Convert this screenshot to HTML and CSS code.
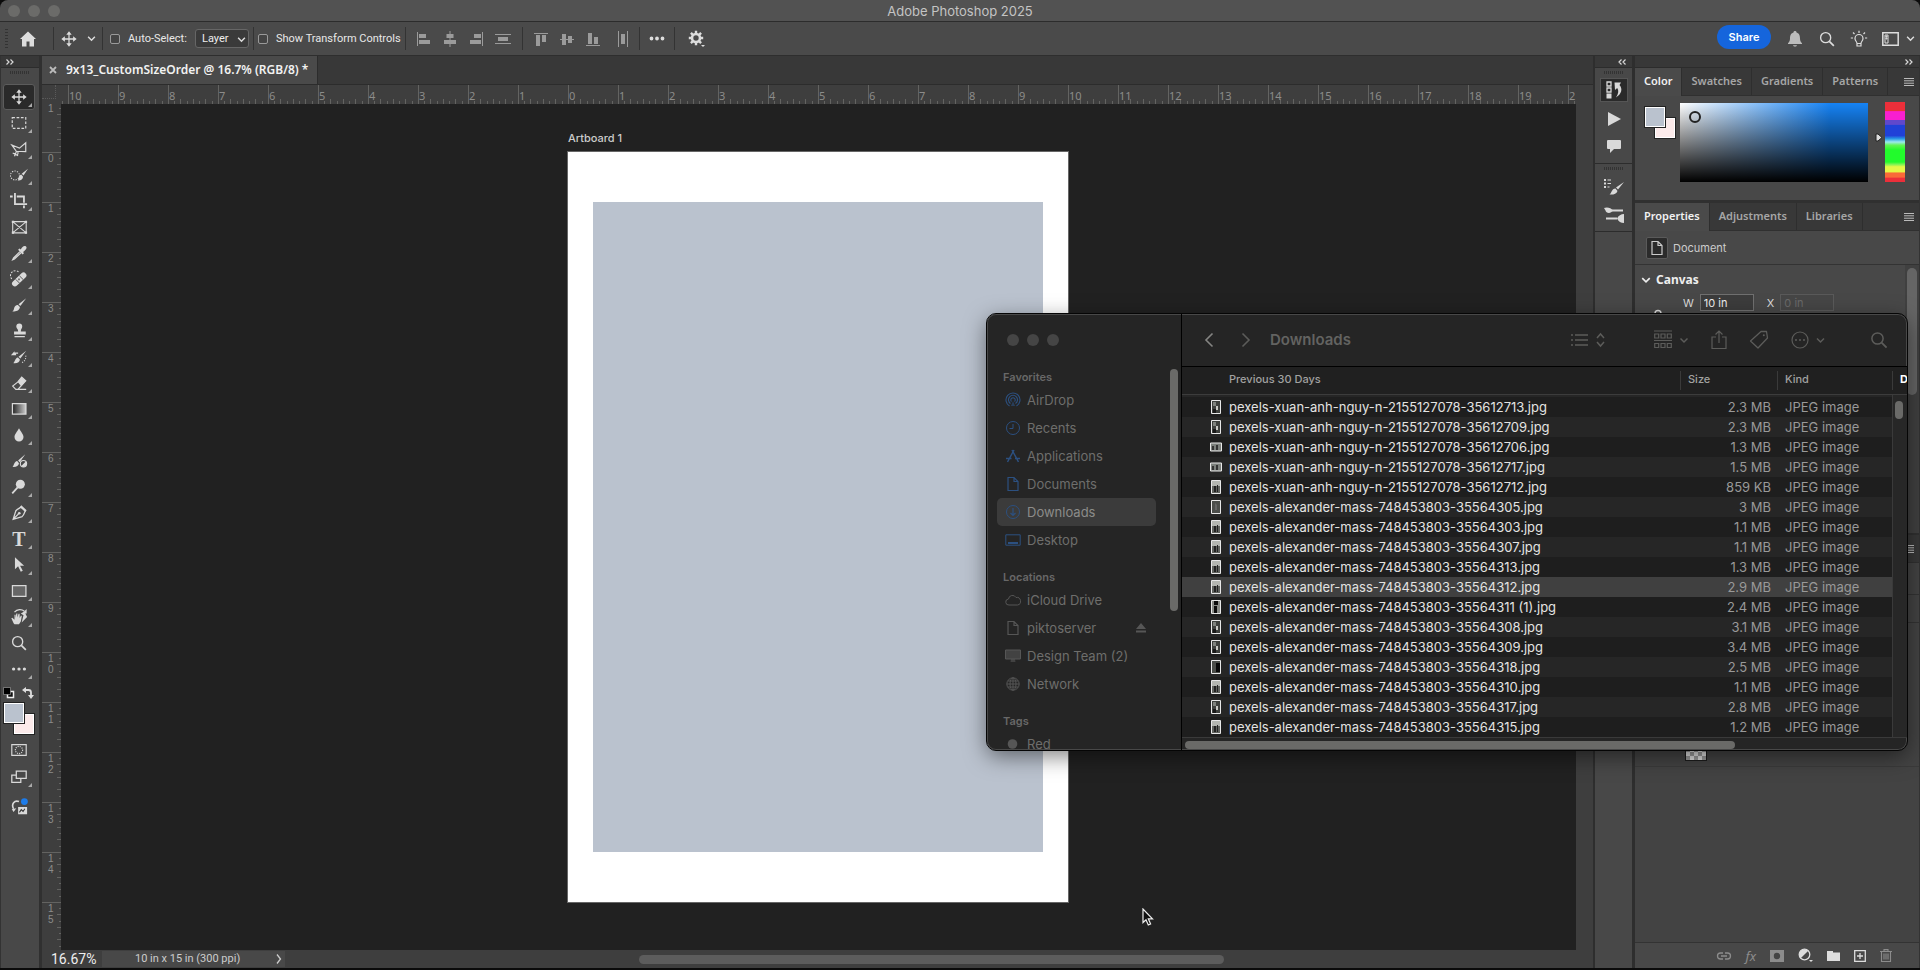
FILE: index.html
```html
<!DOCTYPE html>
<html lang="en">
<head>
<meta charset="utf-8">
<title>Adobe Photoshop 2025</title>
<link rel="stylesheet" href="styles.css">
</head>
<body>
<svg class="defs" aria-hidden="true">
  <defs>
    <symbol id="move" viewBox="0 0 20 20"><path d="M10 3.500v13M3.500 10h13" stroke="currentColor" stroke-width="1.400"/><path d="M10 1.500l3 3.900H7zM10 18.500l3-3.900H7zM1.500 10l3.900-3v6zM18.500 10l-3.900-3v6z" fill="currentColor"/></symbol>
    <symbol id="chev" viewBox="0 0 8 8"><path d="M1 2.500l3 3 3-3" fill="none" stroke="currentColor" stroke-width="1.300"/></symbol>
    <symbol id="search" viewBox="0 0 20 20"><circle cx="8.500" cy="8.500" r="5.600" fill="none" stroke="currentColor" stroke-width="1.500"/><path d="M12.600 12.600l5 5" stroke="currentColor" stroke-width="1.800"/></symbol>
    <symbol id="menu" viewBox="0 0 10 8"><path d="M0 .5h10M0 2.800h10M0 5.200h10M0 7.500h10" stroke="currentColor"/></symbol>
    <symbol id="page" viewBox="0 0 16 16"><path d="M3 1.500h6l4 4v9H3zM9 1.500v4h4" fill="none" stroke="currentColor" stroke-width="1.200"/></symbol>
    <symbol id="brush" viewBox="0 0 20 20"><path d="M18 2.500L9.500 9.200l2 2z" fill="currentColor"/><path d="M8.800 10l2.200 2.300c-.2 3.400-4 5.700-8.500 4.700 2-.9 1.600-2.300 2.300-4.300C5.600 10.700 7.300 9.600 8.800 10z" fill="currentColor"/></symbol>
    <symbol id="port" viewBox="0 0 12 14"><path d="M1.500.500h9v13h-9z" fill="#61635f" stroke="#e8e8e8"/><path d="M2 1h8v5H2z" fill="#b4b6b1"/><path d="M4 6h2v6H4zM7 5h1v7H7z" fill="#222"/></symbol>
    <symbol id="portdark" viewBox="0 0 12 14"><path d="M1.500.500h9v13h-9z" fill="#3e403d" stroke="#e8e8e8"/><path d="M3 2h3v4H3z" fill="#7f827d"/><path d="M6 6h2v4H6z" fill="#c8c8c4"/><path d="M3 9h3v4H3z" fill="#181818"/></symbol>
    <symbol id="land" viewBox="0 0 12 14"><path d="M.5 3h11v8H.5z" fill="#7c807c" stroke="#e8e8e8"/><path d="M2 6h2v4H2zM6 5h2v5H6z" fill="#333"/></symbol>
    <pattern id="htick" x="7" width="50" height="19" patternUnits="userSpaceOnUse"><path d="M.5 0v19M6.500 16v3M12.500 14v5M19.500 16v3M25.500 14v5M31.500 16v3M37.500 14v5M44.500 16v3" stroke="#636361"/></pattern>
    <pattern id="vtick" y="48" width="19" height="50" patternUnits="userSpaceOnUse"><path d="M0 .5h19M17 6.500h2M15 12.500h4M17 19.500h2M15 25.500h4M17 31.500h2M15 37.500h4M17 44.500h2" stroke="#636361"/></pattern>
  </defs>
</svg>
<div class="app">
  <header class="titlebar">
    <span class="lights"><i></i><i></i><i></i></span>
    <h1>Adobe Photoshop 2025</h1>
  </header>

  <div class="options">
    <div class="seg home"><button aria-label="Home"><svg width="18" height="18" viewBox="0 0 18 18"><path d="M9 1.500l8 7.500h-2v7.500h-4.500v-5h-3v5H3V9H1z" fill="currentColor"/></svg></button></div>
    <div class="seg movetool"><svg width="18" height="18"><use href="#move"/></svg><svg width="9" height="9"><use href="#chev"/></svg></div>
    <div class="seg auto"><label><input type="checkbox">Auto-Select:</label>
      <span class="select"><select aria-label="Auto-Select target"><option>Layer</option></select><svg width="9" height="9"><use href="#chev"/></svg></span></div>
    <div class="seg show"><label><input type="checkbox">Show Transform Controls</label></div>
    <div class="seg align">
      <svg width="14" height="16" viewBox="0 0 14 16"><path d="M.5 1v14" stroke="currentColor"/><path d="M2 3h7v4H2zM2 9h11v4H2z" fill="currentColor"/></svg>
      <svg width="14" height="16" viewBox="0 0 14 16"><path d="M7 0v16" stroke="currentColor"/><path d="M3.500 3h7v4h-7zM1 9h12v4H1z" fill="currentColor"/></svg>
      <svg width="14" height="16" viewBox="0 0 14 16"><path d="M13.500 1v14" stroke="currentColor"/><path d="M5 3h7v4H5zM1 9h11v4H1z" fill="currentColor"/></svg>
      <svg width="16" height="16" viewBox="0 0 16 16"><path d="M0 3.500h16M0 12.500h16" stroke="currentColor"/><path d="M3 6h10v4H3z" fill="currentColor"/></svg>
    </div>
    <div class="seg align">
      <svg width="14" height="16" viewBox="0 0 14 16"><path d="M0 2.500h14" stroke="currentColor"/><path d="M2 4h4v11H2zM8 4h4v7H8z" fill="currentColor"/></svg>
      <svg width="14" height="16" viewBox="0 0 14 16"><path d="M0 8.500h14" stroke="currentColor"/><path d="M2 3h4v11H2zM8 5h4v7H8z" fill="currentColor"/></svg>
      <svg width="14" height="16" viewBox="0 0 14 16"><path d="M0 14.500h14" stroke="currentColor"/><path d="M2 2h4v11H2zM8 6h4v7H8z" fill="currentColor"/></svg>
      <svg class="dist" width="12" height="16" viewBox="0 0 12 16"><path d="M1.500 0v16M10.500 0v16" stroke="currentColor"/><path d="M4 3h4v10H4z" fill="currentColor"/></svg>
    </div>
    <div class="seg dots"><svg width="16" height="5" viewBox="0 0 16 5"><path d="M2.500 2.500h0M8 2.500h0M13.500 2.500h0" stroke="currentColor" stroke-width="3.800" stroke-linecap="round"/></svg></div>
    <div class="seg gear"><svg width="18" height="18" viewBox="0 0 18 18"><circle cx="8" cy="8" r="4" fill="none" stroke="currentColor" stroke-width="2.600"/><path d="M8 .8v3M8 12.200v3M.8 8h3M12.200 8h3M2.900 2.900l2 2M11.100 11.100l2 2M13.100 2.900l-2 2M4.900 11.100l-2 2" stroke="currentColor" stroke-width="2.400"/><path d="M13 15h4l-2 2z" fill="currentColor"/></svg></div>
    <div class="actions">
      <button class="share">Share</button>
      <svg width="18" height="18" viewBox="0 0 18 18"><path d="M9 1c1 0 1.500.6 1.500 1.400C13.500 3.200 14 6 14 8.500c0 2.500.7 3.500 2 4.700V14H2v-.8c1.300-1.200 2-2.200 2-4.700 0-2.500.5-5.300 3.500-6.100C7.500 1.600 8 1 9 1zM7 15.200h4c-.3 1.800-3.700 1.800-4 0z" fill="#bcbcbc"/></svg>
      <svg width="18" height="18"><use href="#search"/></svg>
      <svg width="18" height="18" viewBox="0 0 18 18"><path d="M7 13.500c0-2-2-2.600-2-5a4 4 0 018 0c0 2.400-2 3-2 5v2.500H7zM7 13.500h4M9 3V.8M4.500 4L3 2.500M13.500 4L15 2.500M3 8H.8M15 8h2.200" fill="none" stroke="currentColor" stroke-width="1.200"/></svg>
      <svg width="17" height="14" viewBox="0 0 17 14"><path d="M.8.800h15.400v12.400H.8z" fill="none" stroke="currentColor" stroke-width="1.500"/><path d="M3 3h3v8H3zM4 4h1v1H4zM4 6h1v1H4z" fill="none" stroke="currentColor"/></svg>
      <svg width="9" height="9"><use href="#chev"/></svg>
    </div>
  </div>

  <main class="work">
    <aside class="tools">
      <div class="colhead"><svg width="8" height="6" viewBox="0 0 8 6"><path d="M.5.500L3 3 .5 5.500M4.500.500L7 3 4.500 5.500" fill="none" stroke="currentColor" stroke-width="1.200"/></svg></div>
      <div class="grip"></div>
      <button class="tool on more" aria-label="Move"><svg><use href="#move"/></svg></button>
      <button class="tool more" aria-label="Marquee"><svg viewBox="0 0 20 20"><path d="M2.500 4h15v12h-15z" fill="none" stroke="currentColor" stroke-width="1.300" stroke-dasharray="3 1.800"/></svg></button>
      <button class="tool more" aria-label="Lasso"><svg viewBox="0 0 20 20"><path d="M7 12.500L2 5.500l8.500 3.500 7-6v10L7 12.500zM7 12.500a2 2 0 11-2 2M7 13l-2 5M3 14.500l6 3" fill="none" stroke="currentColor" stroke-width="1.300"/></svg></button>
      <button class="tool more" aria-label="Quick selection"><svg viewBox="0 0 20 20"><circle cx="5.500" cy="10.500" r="5" fill="none" stroke="currentColor" stroke-width="1.200" stroke-dasharray="1.400 1.400"/><path d="M20 3l-7 5.500 2 2zM12.500 9.500l2 2.500c0 3-3 4.500-6 4 1.500-1 .5-5.500 4-6.500z" fill="currentColor"/></svg></button>
      <button class="tool more" aria-label="Crop"><svg viewBox="0 0 20 20"><path d="M5.500 1v12.500H19M0 5h3M7.500 5h8v7M15.500 15v3" fill="none" stroke="currentColor" stroke-width="2"/></svg></button>
      <button class="tool" aria-label="Frame"><svg viewBox="0 0 20 20"><path d="M3 4h15v12.500H3zM3 4l15 12.500M18 4L3 16.500" fill="none" stroke="currentColor" stroke-width="1.200"/><path d="M2 3h2.500v2.500H2zM16.500 3H19v2.500h-2.500zM2 15h2.500v2.500H2zM16.500 15H19v2.500h-2.500z" fill="currentColor"/></svg></button>
      <button class="tool more" aria-label="Eyedropper"><svg viewBox="0 0 20 20"><path d="M11 8.500l-7 7-1 2 2-.8 7.300-7" fill="none" stroke="currentColor" stroke-width="1.400"/><path d="M9 6.500l1.500-1.500L12 6c1.500-3 3.500-4.500 5.500-3.500S18 6.500 14.500 9l1 1.200-1.500 1.500z" fill="currentColor"/></svg></button>
      <button class="tool more" aria-label="Healing brush"><svg viewBox="0 0 20 20"><path d="M5.500 15L15 6" stroke="currentColor" stroke-width="6.500" stroke-linecap="round"/><path d="M6.500 10.500l4 4M10.500 6.500l4 4" stroke="#484848" stroke-width="1"/><path d="M10 9.500v2" stroke="#484848" stroke-width="1.500"/><path d="M2 10a5 5 0 018-7.500" fill="none" stroke="currentColor" stroke-width="1.200" stroke-dasharray="2 1.500"/></svg></button>
      <button class="tool more" aria-label="Brush"><svg><use href="#brush"/></svg></button>
      <button class="tool more" aria-label="Clone stamp"><svg viewBox="0 0 20 20"><path d="M7 5a3.300 3.300 0 116.600 0c0 2-1.600 2.500-1.600 5.500h5.500V14h-13v-3.500h4.600C9.100 7.500 7 7 7 5zM5 15.500h11.500V17H5z" fill="currentColor"/></svg></button>
      <button class="tool more" aria-label="History brush"><svg viewBox="0 0 20 20"><path d="M18 3L9.500 9.800l2 2zM8.800 10.500l2.200 2.200c0 3-3.500 4.800-7.500 4 2-.9 2-5.600 5.300-6.200zM1 8l4-4.500V5h4v1.500H6.500L7 8z" fill="currentColor"/><path d="M17.500 8.500c.5 4-1.500 6.500-4.500 8" fill="none" stroke="currentColor" stroke-width="1.200" stroke-dasharray="1.200 1.500"/></svg></button>
      <button class="tool more" aria-label="Eraser"><svg viewBox="0 0 20 20"><path d="M8.500 9L13 3.500l4.500 4-5 6z" fill="currentColor"/><path d="M8.500 9L3 13.500 6.500 17h2.300L17.500 7.500 13 3.500zM6.500 17H18" fill="none" stroke="currentColor" stroke-width="1.300"/></svg></button>
      <button class="tool more" aria-label="Gradient"><svg viewBox="0 0 20 20"><defs><linearGradient id="gg"><stop stop-color="#222"/><stop offset="1" stop-color="#ccc"/></linearGradient></defs><path d="M2.700 4h15v11.600h-15z" fill="url(#gg)" stroke="currentColor" stroke-width="1.400"/></svg></button>
      <button class="tool more" aria-label="Blur"><svg viewBox="0 0 20 20"><path d="M10 2.500c2 4 5 6.500 5 9.800a5 5 0 01-10 0C5 9 8 6.500 10 2.500z" fill="currentColor"/></svg></button>
      <button class="tool" aria-label="Mixer brush"><svg viewBox="0 0 20 20"><path d="M17 2.500L9 9.500l1.800 1.800zM8 10l2 2.500c-.3 3-3.500 4.500-7.500 4 2-.9 2-6 5.500-6.500z" fill="currentColor"/><circle cx="15" cy="13" r="3.500" fill="none" stroke="currentColor" stroke-width="1.200"/><path d="M12.500 15.500l5-5a3.500 3.500 0 01-5 5z" fill="currentColor"/></svg></button>
      <button class="tool more" aria-label="Dodge"><svg viewBox="0 0 20 20"><circle cx="11.500" cy="7" r="5" fill="currentColor"/><path d="M8.500 10.500l-6 6.500" stroke="currentColor" stroke-width="2"/></svg></button>
      <button class="tool more" aria-label="Pen"><svg viewBox="0 0 20 20"><path d="M12.500 3l4.500 4.500c-1 2-1.500 5-3.500 6.500L3.500 17l3-9.500C8 5.500 10.500 5 12.500 3zM3.500 17l6-6" fill="none" stroke="currentColor" stroke-width="1.400"/><circle cx="10.300" cy="10.300" r="1.500" fill="currentColor"/><path d="M12.500 1.500L18.500 7l-1.500 2-6-5.500z" fill="currentColor"/></svg></button>
      <button class="tool more type" aria-label="Type">T</button>
      <button class="tool more" aria-label="Path selection"><svg viewBox="0 0 20 20"><path d="M5.500 1.500v13.300L9 11.500l3 6 2.200-1.200-3-5.500h4.500z" fill="currentColor"/></svg></button>
      <button class="tool more" aria-label="Rectangle"><svg viewBox="0 0 20 20"><path d="M2.700 4h15v12h-15z" fill="#666" stroke="currentColor" stroke-width="1.400"/></svg></button>
      <button class="tool more" aria-label="Rotate view"><svg viewBox="0 0 20 20"><path d="M4 17L1.500 11.500l1-.7L5 13V7.500h1.200V11L7 6h1.200v4.500L9.500 6.500h1.200V11l1.300-2.500h1.200L12 15l-2 3H5zM12 6l4-2 3 6-6 6 2-8z" fill="currentColor"/><path d="M5 4.500C8 1 13 1 16 3.500" fill="none" stroke="currentColor" stroke-width="1.400"/><path d="M18.500 1v5h-5z" fill="currentColor"/></svg></button>
      <button class="tool" aria-label="Zoom"><svg><use href="#search"/></svg></button>
      <button class="tool more" aria-label="Edit toolbar"><svg viewBox="0 0 20 20"><path d="M4 10h0M10 10h0M16 10h0" stroke="currentColor" stroke-width="3.600" stroke-linecap="round"/></svg></button>
      <div class="mini"><svg width="12" height="12" viewBox="0 0 12 12"><path d="M4.500 4.500h6v6h-6z" fill="#111" stroke="#eee" stroke-width="1.500"/><path d="M.5.500h7v7h-7z" fill="#000" stroke="#aaa" stroke-width=".6"/></svg><svg width="12" height="12" viewBox="0 0 12 12"><path d="M3 3h3.500c2 0 2.500 1 2.500 2.500V8" fill="none" stroke="currentColor" stroke-width="1.800"/><path d="M0 3l4-3v6zM9 12L6 8h6z" fill="currentColor"/></svg></div>
      <div class="chips"><i class="chip bg"></i><i class="chip fg"></i></div>
      <div class="last">
        <button class="tool" aria-label="Quick mask"><svg viewBox="0 0 20 20"><path d="M2 4h16v12H2z" fill="none" stroke="currentColor" stroke-width="1.300"/><circle cx="10" cy="10" r="4" fill="none" stroke="currentColor" stroke-width="1.300" stroke-dasharray="1.200 1.200"/></svg></button>
        <button class="tool more" aria-label="Screen mode"><svg viewBox="0 0 20 20"><path d="M7 3.500h11v8H7zM7 8H2v8h10v-4.500" fill="none" stroke="currentColor" stroke-width="1.400"/></svg></button>
        <button class="tool" aria-label="Generate image"><svg viewBox="0 0 20 20"><path d="M4 12C1 7 5 2 10 4" fill="none" stroke="currentColor" stroke-width="1.800"/><path d="M2 12.500l5-1-3 4zM9 10h10v8H9z" fill="currentColor"/><path d="M10.500 16l2-3 2 2 2-3" fill="none" stroke="#333" stroke-width="1.200"/><circle cx="16" cy="4" r="3.800" fill="#1d7be8"/></svg></button>
      </div>
    </aside>

    <section class="doc">
      <div class="tabs"><div class="doctab"><button aria-label="Close document"><svg width="8" height="8" viewBox="0 0 8 8"><path d="M1 1l6 6M7 1L1 7" stroke="currentColor" stroke-width="1.800"/></svg></button><span>9x13_CustomSizeOrder @ 16.7% (RGB/8) *</span></div></div>
      <div class="sheet">
        <div class="corner"></div>
        <div class="hruler"><svg width="100%" height="19"><rect width="100%" height="19" fill="url(#htick)"/></svg>
          <div class="nums"><span>10</span><span>9</span><span>8</span><span>7</span><span>6</span><span>5</span><span>4</span><span>3</span><span>2</span><span>1</span><span>0</span><span>1</span><span>2</span><span>3</span><span>4</span><span>5</span><span>6</span><span>7</span><span>8</span><span>9</span><span>10</span><span>11</span><span>12</span><span>13</span><span>14</span><span>15</span><span>16</span><span>17</span><span>18</span><span>19</span><span>2</span></div></div>
        <div class="vruler"><svg width="19" height="100%"><rect width="19" height="100%" fill="url(#vtick)"/></svg>
          <div class="nums"><span>1</span><span>0</span><span>1</span><span>2</span><span>3</span><span>4</span><span>5</span><span>6</span><span>7</span><span>8</span><span>9</span><span>1<br>0</span><span>1<br>1</span><span>1<br>2</span><span>1<br>3</span><span>1<br>4</span><span>1<br>5</span></div></div>
        <div class="canvas">
          <div class="artboard"><span>Artboard 1</span><div class="shape"></div></div>
        </div>
      </div>
      <footer class="status"><span class="zoom">16.67%</span><span class="info"><span>10 in x 15 in (300 ppi)</span><svg width="6" height="10" viewBox="0 0 6 10"><path d="M1 .5L4.500 5 1 9.500" fill="none" stroke="currentColor" stroke-width="1.300"/></svg></span><div class="track"><i></i></div></footer>
    </section>

    <aside class="dock">
      <div class="colhead"><svg width="8" height="6" viewBox="0 0 8 6"><path d="M3.500.500L1 3l2.500 2.500M7.500.500L5 3l2.500 2.500" fill="none" stroke="currentColor" stroke-width="1.200"/></svg></div>
      <div class="grp"><div class="grip"></div>
        <button class="on" aria-label="History"><svg width="18" height="18" viewBox="0 0 18 18"><path d="M2 1h4v4H2zM2 7h4v4H2z" fill="none" stroke="currentColor" stroke-width="1.300"/><path d="M1.500 12.500h5v5h-5zM9.500 1.500h6.500L14.500 4c3.500 4 2 9-3.500 12.500 2.500-4 3-7 1.200-9.500L10 9z" fill="currentColor"/></svg></button>
        <button aria-label="Actions"><svg width="18" height="18" viewBox="0 0 18 18"><path d="M3 2l13 7-13 7z" fill="currentColor"/></svg></button>
        <button aria-label="Comments"><svg width="18" height="18" viewBox="0 0 18 18"><path d="M3 3h12a1 1 0 011 1v7a1 1 0 01-1 1H9l-4 4v-4H3a1 1 0 01-1-1V4a1 1 0 011-1z" fill="currentColor"/></svg></button></div>
      <div class="grp"><div class="grip"></div>
        <button aria-label="Brush settings"><svg width="20" height="20" viewBox="0 0 20 20"><path d="M20 5l-8 5.500 2 2zM11.500 11.500l2 2.500c-1 3-4.500 4-8 3.500 2-1 2-6 6-6zM0 2h2v2H0zM0 5.500h2v2H0zM0 9h2v2H0zM3.500 2.500H7v1H3.500zM3.500 6H7v1H3.500zM3.500 9.500h2v1h-2z" fill="currentColor"/></svg></button>
        <button aria-label="Brushes"><svg width="20" height="20" viewBox="0 0 20 20"><path d="M8 6.500h11M2 14.500h11" stroke="currentColor" stroke-width="2.200"/><path d="M0 4c2-1 7-1 9 2.500-2 3.500-7 3-7.500 0zM20 10v9c-3 0-5.500-1.500-7-4.500 1.500-3 4-4.500 7-4.500z" fill="currentColor"/></svg></button></div>
    </aside>

    <aside class="panels">
      <div class="colhead"><svg width="8" height="6" viewBox="0 0 8 6"><path d="M.5.500L3 3 .5 5.500M4.500.500L7 3 4.500 5.500" fill="none" stroke="currentColor" stroke-width="1.200"/></svg></div>
      <section class="panel">
        <div class="ptabs"><button class="on">Color</button><button>Swatches</button><button>Gradients</button><button>Patterns</button><svg width="10" height="8"><use href="#menu"/></svg></div>
        <div class="color"><div class="chips"><i class="chip bg"></i><i class="chip fg"></i></div><div class="field"><i></i></div><div class="hue"><svg width="8" height="9" viewBox="0 0 8 9"><path d="M1 1h2l4 3.500-4 3.500H1z" fill="#ddd" stroke="#222"/></svg></div></div>
      </section>
      <section class="panel props">
        <div class="ptabs"><button class="on">Properties</button><button>Adjustments</button><button>Libraries</button><svg width="10" height="8"><use href="#menu"/></svg></div>
        <div class="kind"><span><svg width="16" height="16"><use href="#page"/></svg></span>Document</div>
        <div class="propbody">
          <div class="scroll"><i></i></div>
          <h2><svg width="10" height="10"><use href="#chev"/></svg>Canvas</h2>
          <div class="dims"><label>W <input value="10 in"></label><label>X <input value="0 in" disabled></label></div>
          <svg class="link" width="10" height="12" viewBox="0 0 10 12"><path d="M2 12V4.500a3 3 0 016 0V12M5 4v4" fill="none" stroke="currentColor" stroke-width="1.400"/></svg>
        </div>
      </section>
      <section class="panel layers">
        <div class="ptabs"><svg width="10" height="8"><use href="#menu"/></svg></div>
        <div class="lbar"></div><div class="lbar"></div>
        <div class="layer"><i></i></div>
        <div class="lempty"></div>
        <div class="lfoot">
          <svg class="dim" width="16" height="14" viewBox="0 0 16 14"><path d="M7 4H4.500a3 3 0 000 6H7M9 4h2.500a3 3 0 010 6H9M5 7h6" fill="none" stroke="currentColor" stroke-width="1.300"/></svg>
          <em class="dim">fx</em>
          <svg class="dim" width="14" height="12" viewBox="0 0 14 12"><path d="M0 0h14v12H0z" fill="currentColor"/><circle cx="7" cy="6" r="3.200" fill="#444"/></svg>
          <svg width="15" height="15" viewBox="0 0 15 15"><circle cx="6.500" cy="6.500" r="5.300" fill="none" stroke="currentColor" stroke-width="1.300"/><path d="M2.700 10.300A5.300 5.300 0 0110.300 2.700zM11 12h4l-2 2z" fill="currentColor"/></svg>
          <svg width="13" height="12" viewBox="0 0 13 12"><path d="M0 1h6v1.500h7V11H0z" fill="currentColor"/></svg>
          <svg width="12" height="12" viewBox="0 0 12 12"><path d="M.7.700h10.600v10.600H.7zM6 3v6M3 6h6" fill="none" stroke="currentColor" stroke-width="1.300"/></svg>
          <svg class="dim" width="12" height="13" viewBox="0 0 12 13"><path d="M0 2.500h12M4 2.500V.6h4v1.900M1.500 2.500v10h9v-10M4 4.500v6M6 4.500v6M8 4.500v6" fill="none" stroke="currentColor" stroke-width="1.100"/></svg>
        </div>
      </section>
    </aside>
  </main>
</div>

<div class="finder">
  <nav class="side">
    <span class="lights"><i></i><i></i><i></i></span>
    <h3>Favorites</h3>
    <a href="#"><svg viewBox="0 0 16 16"><path d="M4.500 14a7 7 0 117 0M5.500 11.500a4.500 4.500 0 115 0M6.500 9.500a2.200 2.200 0 113 0" fill="none" stroke="currentColor" stroke-width="1.100"/><path d="M8 9l2 5H6z" fill="currentColor" opacity=".6"/></svg>AirDrop</a>
    <a href="#"><svg viewBox="0 0 16 16"><circle cx="8" cy="8" r="6.500" fill="none" stroke="currentColor"/><path d="M8 4v4.500H4.500" fill="none" stroke="currentColor"/></svg>Recents</a>
    <a href="#"><svg viewBox="0 0 16 16"><path d="M7 2l6.500 12M9 2L2.500 14M1 10.500h5.500M10 10.500h5" fill="none" stroke="currentColor" stroke-width="1.500"/></svg>Applications</a>
    <a href="#"><svg viewBox="0 0 16 16"><use href="#page"/></svg>Documents</a>
    <a href="#" class="on"><svg viewBox="0 0 16 16"><circle cx="8" cy="8" r="6.500" fill="none" stroke="currentColor"/><path d="M8 4v7.500M5.500 9L8 11.500 10.500 9" fill="none" stroke="currentColor" stroke-width="1.200"/></svg>Downloads</a>
    <a href="#"><svg viewBox="0 0 16 16"><path d="M.8 2.800h14.400v10.400H.8z" fill="none" stroke="currentColor"/><path d="M3 10h10v2H3z" fill="currentColor"/></svg>Desktop</a>
    <h3>Locations</h3>
    <a href="#" class="loc"><svg viewBox="0 0 16 16"><path d="M4 13a3 3 0 01-.5-6A4 4 0 0111 5.500a3.800 3.800 0 011.500 7.500z" fill="none" stroke="currentColor"/></svg>iCloud Drive</a>
    <a href="#" class="loc"><svg viewBox="0 0 16 16"><use href="#page"/></svg>piktoserver<svg class="eject" viewBox="0 0 16 16"><path d="M8 3l5 6H3zM3 10.500h10v2H3z" fill="currentColor"/></svg></a>
    <a href="#" class="loc"><svg viewBox="0 0 16 16"><path d="M.8 2h14.400v9H.8zM6 11h4l.5 3h-5z" fill="currentColor" opacity=".6"/><path d="M.5 2h15v9H.5z" fill="none" stroke="currentColor"/></svg>Design Team (2)</a>
    <a href="#" class="loc"><svg viewBox="0 0 16 16"><circle cx="8" cy="8" r="6.200" fill="none" stroke="currentColor"/><ellipse cx="8" cy="8" rx="3" ry="6.200" fill="none" stroke="currentColor"/><path d="M2 8h12M8 2v12M3 5h10M3 11h10" stroke="currentColor"/></svg>Network</a>
    <h3>Tags</h3>
    <a href="#" class="loc"><svg viewBox="0 0 16 16"><circle cx="7.500" cy="8" r="4.800" fill="currentColor"/></svg>Red</a>
    <i class="thumb"></i>
  </nav>
  <section class="files">
    <div class="ftool">
      <svg class="back" width="10" height="16" viewBox="0 0 10 16"><path d="M8.500 1.500L2 8l6.500 6.500" fill="none" stroke="currentColor" stroke-width="1.600"/></svg>
      <svg width="10" height="16" viewBox="0 0 10 16"><path d="M1.500 1.500L8 8l-6.500 6.500" fill="none" stroke="currentColor" stroke-width="1.600"/></svg>
      <h2>Downloads</h2>
      <svg width="34" height="18" viewBox="0 0 34 18"><path d="M0 4h2M0 9h2M0 14h2M4 4h13M4 9h13M4 14h13" stroke="currentColor" stroke-width="1.300"/><path d="M26 7l3.500-4L33 7M26 11l3.500 4 3.500-4" fill="none" stroke="currentColor" stroke-width="1.500"/></svg>
      <svg class="g1" width="34" height="20" viewBox="0 0 34 20"><path d="M0 1h18M0 10.500h18" stroke="currentColor"/><path d="M.7 4h4v4h-4zM7 4h4v4H7zM13.300 4h4v4h-4zM.7 13.500h4v4h-4zM7 13.500h4v4H7zM13.300 13.500h4v4h-4z" fill="none" stroke="currentColor" stroke-width="1.200"/><path d="M26.500 8.500l3.500 3.500 3.500-3.500" fill="none" stroke="currentColor" stroke-width="1.500"/></svg>
      <svg class="g2" width="16" height="20" viewBox="0 0 16 20"><path d="M5 7H1v11.500h14V7h-4M8 13V1.500M4.500 4.500L8 1l3.500 3.500" fill="none" stroke="currentColor" stroke-width="1.200"/></svg>
      <svg class="g3" width="20" height="20" viewBox="0 0 20 20"><path d="M12 1.500h5.500L18.500 8 9 18 1.500 11z" fill="none" stroke="currentColor" stroke-width="1.300" stroke-linejoin="round"/><circle cx="14.800" cy="5.300" r="1" fill="currentColor"/></svg>
      <svg class="g4" width="34" height="18" viewBox="0 0 34 18"><circle cx="9" cy="9" r="8" fill="none" stroke="currentColor" stroke-width="1.200"/><path d="M5 9h0M9 9h0M13 9h0" stroke="currentColor" stroke-width="2" stroke-linecap="round"/><path d="M26 7.500l3.500 3.500L33 7.500" fill="none" stroke="currentColor" stroke-width="1.500"/></svg>
      <svg class="g5" width="20" height="20"><use href="#search"/></svg>
    </div>
    <div class="list">
    <table>
      <thead><tr><th>Previous 30 Days</th><th>Size</th><th>Kind</th><th>D</th></tr></thead>
      <tbody>
        <tr class="part"><td colspan="3"></td><td></td></tr>
        <tr><td><svg><use href="#portdark"/></svg>pexels-xuan-anh-nguy-n-2155127078-35612713.jpg</td><td>2.3 MB</td><td>JPEG image</td><td></td></tr>
        <tr><td><svg><use href="#portdark"/></svg>pexels-xuan-anh-nguy-n-2155127078-35612709.jpg</td><td>2.3 MB</td><td>JPEG image</td><td></td></tr>
        <tr><td><svg><use href="#land"/></svg>pexels-xuan-anh-nguy-n-2155127078-35612706.jpg</td><td>1.3 MB</td><td>JPEG image</td><td></td></tr>
        <tr><td><svg><use href="#land"/></svg>pexels-xuan-anh-nguy-n-2155127078-35612717.jpg</td><td>1.5 MB</td><td>JPEG image</td><td></td></tr>
        <tr><td><svg><use href="#port"/></svg>pexels-xuan-anh-nguy-n-2155127078-35612712.jpg</td><td>859 KB</td><td>JPEG image</td><td></td></tr>
        <tr><td><svg viewBox="0 0 12 14"><path d="M1.500.500h9v13h-9z" fill="#4c4e4b" stroke="#e8e8e8"/><path d="M5 3l2 2v5H5z" fill="#666"/></svg>pexels-alexander-mass-748453803-35564305.jpg</td><td>3 MB</td><td>JPEG image</td><td></td></tr>
        <tr><td><svg><use href="#port"/></svg>pexels-alexander-mass-748453803-35564303.jpg</td><td>1.1 MB</td><td>JPEG image</td><td></td></tr>
        <tr><td><svg><use href="#port"/></svg>pexels-alexander-mass-748453803-35564307.jpg</td><td>1.1 MB</td><td>JPEG image</td><td></td></tr>
        <tr><td><svg><use href="#port"/></svg>pexels-alexander-mass-748453803-35564313.jpg</td><td>1.3 MB</td><td>JPEG image</td><td></td></tr>
        <tr class="sel"><td><svg><use href="#port"/></svg>pexels-alexander-mass-748453803-35564312.jpg</td><td>2.9 MB</td><td>JPEG image</td><td></td></tr>
        <tr><td><svg viewBox="0 0 12 14"><path d="M1.500.500h9v13h-9z" fill="#8a8c88" stroke="#e8e8e8"/><path d="M4 1h4v4H4zM4 6h3v7H4z" fill="#0c0c0c"/></svg>pexels-alexander-mass-748453803-35564311 (1).jpg</td><td>2.4 MB</td><td>JPEG image</td><td></td></tr>
        <tr><td><svg><use href="#portdark"/></svg>pexels-alexander-mass-748453803-35564308.jpg</td><td>3.1 MB</td><td>JPEG image</td><td></td></tr>
        <tr><td><svg><use href="#portdark"/></svg>pexels-alexander-mass-748453803-35564309.jpg</td><td>3.4 MB</td><td>JPEG image</td><td></td></tr>
        <tr><td><svg viewBox="0 0 12 14"><path d="M1.500.500h9v13h-9z" fill="#4b4d49" stroke="#e8e8e8"/><path d="M6 3h4v9H6z" fill="#080808"/></svg>pexels-alexander-mass-748453803-35564318.jpg</td><td>2.5 MB</td><td>JPEG image</td><td></td></tr>
        <tr><td><svg><use href="#port"/></svg>pexels-alexander-mass-748453803-35564310.jpg</td><td>1.1 MB</td><td>JPEG image</td><td></td></tr>
        <tr><td><svg><use href="#portdark"/></svg>pexels-alexander-mass-748453803-35564317.jpg</td><td>2.8 MB</td><td>JPEG image</td><td></td></tr>
        <tr><td><svg><use href="#port"/></svg>pexels-alexander-mass-748453803-35564315.jpg</td><td>1.2 MB</td><td>JPEG image</td><td></td></tr>
      </tbody>
    </table>
    <i class="thumb"></i>
    </div>
    <div class="hbar"><i></i></div>
  </section>
</div>
<svg class="cursor" width="12" height="19" viewBox="0 0 12 19"><path d="M1 1v13.500l3-2.800 2.300 5.300 2.300-1-2.300-5.200h4.200z" fill="#111" stroke="#eee" stroke-width="1.200"/></svg>
</body>
</html>
```

FILE: styles.css
```css
* { box-sizing: border-box; }
body { margin: 0; background: #0b0b0b; color: #ddd; font: 12px/16px Inter, "Liberation Sans", sans-serif; height: 100vh; overflow: hidden; position: relative; }
svg { display: block; flex: none; }
.defs { position: absolute; width: 0; height: 0; }
button { background: none; border: 0; padding: 0; margin: 0; color: inherit; font: inherit; }
h1, h2, h3 { margin: 0; font: inherit; }
.app { height: 100%; display: grid; grid-template-rows: 22px 34px minmax(0, 1fr); padding-bottom: 2px; }

.titlebar { background: #525252; border-bottom: 1px solid #2c2c2c; display: grid; grid-template-columns: 1fr auto 1fr; align-items: center; border-radius: 8px 8px 0 0; }
.titlebar h1 { font-size: 13px; color: #c4c4c4; }
.lights { display: flex; gap: 8px; }
.lights i { width: 12px; height: 12px; border-radius: 50%; background: #6b6b69; }
.titlebar .lights { padding-left: 8px; }

.options { background: #4a4a4a; border-bottom: 1px solid #2e2e2e; display: flex; align-items: stretch; }
.seg { display: flex; align-items: center; position: relative; }
.seg::after { content: ""; position: absolute; right: 0; top: 5px; bottom: 5px; width: 1px; background: #333; }
.seg.gear::after { display: none; }
.home { width: 54px; padding-left: 19px; }
.home::before { content: ""; position: absolute; left: 5px; top: 7px; bottom: 7px; width: 3px; background: repeating-linear-gradient(#333 0 1px, transparent 1px 3px); }
.movetool { width: 49px; padding-left: 6px; gap: 9px; }
.auto { width: 151px; padding: 0 5px 0 7px; justify-content: space-between; }
.show { width: 152px; padding-left: 4px; }
.options label { display: flex; align-items: center; gap: 8px; font: 11px/16px Roboto, sans-serif; color: #e8e8e8; white-space: nowrap; }
.options input { appearance: none; width: 10px; height: 10px; margin: 0; border: 1px solid #9a9a9a; border-radius: 2px; background: #444; }
.select { position: relative; }
.select svg { position: absolute; right: 3px; top: 6px; pointer-events: none; }
.select select { appearance: none; width: 54px; height: 19px; padding: 0 6px; background: #3a3a3a; border: 1px solid #666; border-radius: 3px; color: #eee; font: 11px Roboto, sans-serif; display: block; }
.align { width: 117px; padding-left: 11px; gap: 12px; color: #9b9b9b; }
.align .dist { margin-left: 5px; }
.dots { width: 35px; padding-left: 9px; }
.gear { padding-left: 13px; }
.actions { margin-left: auto; display: flex; align-items: center; gap: 14px; padding-right: 5px; }
.actions svg:last-child { margin-left: -7px; }
.share { width: 54px; height: 24px; border-radius: 12px; background: #1565dc; color: #fff; font: 600 11px/16px Inter, sans-serif; margin: 0 1px 3px 0; }

.work { display: grid; grid-template: minmax(0, 1fr) / 42px minmax(0, 1fr) 40px 285px; min-height: 0; }
.colhead { height: 12px; background: #383838; border-bottom: 1px solid #2c2c2c; color: #d8d8d8; display: flex; align-items: center; flex: none; }
.grip { width: 19px; height: 3px; margin: 3px auto 0; background: repeating-linear-gradient(90deg, #333 0 1px, transparent 1px 2px); flex: none; }

.tools { background: #484848; border-left: 1px solid #333; border-right: 3px solid #303030; display: flex; flex-direction: column; overflow: hidden; }
.tools .colhead { padding-left: 5px; }
.tools .grip { margin: 3px 0 10px 9px; }
.tool { width: 32px; height: 26px; margin-left: 2px; flex: none; display: grid; place-items: center; position: relative; color: #d9d9d9; border: 1px solid transparent; border-radius: 3px; }
.tool svg { width: 18px; height: 18px; }
.tool.on { background: #2a2a2a; border-color: #5c5c5c; }
.tool.more::after { content: ""; position: absolute; right: 2px; bottom: 2px; border: 2px solid transparent; border-right-color: #aaa; border-bottom-color: #aaa; }
.type { font: 700 20px/24px "Liberation Serif", serif; }
.mini { display: flex; justify-content: space-between; padding: 5px 5px 0 2px; height: 19px; color: #ddd; }
.chips { position: relative; width: 30px; height: 31px; flex: none; }
.tools .chips { margin: 2px 0 3px 3px; }
.chip { position: absolute; width: 20px; height: 20px; border: 1px solid #fff; outline: 1px solid #222; }
.chip.fg { left: 0; top: 0; background: #bac2ce; }
.chip.bg { right: 0; bottom: 0; background: #fbeaea; }
.last { display: grid; gap: 1px; }
.last .tool:last-child { margin-top: 3px; }

.doc { display: grid; grid-template-rows: 29px minmax(0, 1fr) 18px; min-width: 0; background: #3e3e3e; border-right: 2px solid #2e2e2e; }
.tabs { background: #383838; border-bottom: 1px solid #2c2c2c; display: flex; }
.doctab { background: #4a4a4a; border-right: 1px solid #2c2c2c; display: flex; align-items: center; gap: 9px; padding: 0 9px 0 7px; color: #f2f2f2; font: 600 12px/16px "Noto Sans", sans-serif; white-space: nowrap; }
.doctab button { color: #bbb; }
.sheet { display: grid; grid-template-columns: 19px minmax(0, 1fr); grid-template-rows: 19px minmax(0, 1fr); padding-right: 17px; min-height: 0; }
.corner { border-right: 1px dotted #5a5a5a; border-bottom: 1px dotted #5a5a5a; margin: 0 5px 5px 0; }
.hruler, .vruler { position: relative; overflow: hidden; color: #8c8c8a; font: 11px/10px "Noto Sans", sans-serif; }
.hruler svg, .vruler svg { position: absolute; inset: 0; }
.hruler .nums { position: relative; display: flex; padding: 6px 0 0 8px; }
.hruler span { width: 50px; flex: none; }
.vruler .nums { position: relative; margin-top: -2px; padding-left: 6px; font: 10px/11px "Liberation Sans", sans-serif; }
.vruler span { display: block; height: 50px; padding-top: 1px; }
.canvas { background: #212121; position: relative; overflow: hidden; }
.artboard { position: absolute; left: 507px; top: 48px; width: 500px; height: 750px; background: #fff; outline: 1px solid #666; padding: 50px 25px; }
.artboard span { position: absolute; left: 0; top: -22px; font: 500 11px/16px Inter, sans-serif; color: #ccc; }
.shape { height: 100%; background: #bac2ce; }
.status { display: flex; align-items: center; padding-left: 9px; }
.zoom { font: 14px/18px Roboto, sans-serif; color: #eee; width: 51px; }
.info { display: flex; justify-content: space-between; align-items: center; width: 183px; height: 16px; background: #484848; padding: 0 3px 0 33px; font: 11px/16px Roboto, sans-serif; color: #ccc; }
.track { flex: 1; padding-left: 354px; }
.track i { display: block; width: 585px; height: 9px; border-radius: 5px; background: #5c5c5c; }

.dock { background: #484848; border-right: 3px solid #2e2e2e; display: flex; flex-direction: column; color: #d9d9d9; }
.dock .colhead { justify-content: flex-end; padding-right: 6px; }
.grp { border-bottom: 1px solid #2c2c2c; display: flex; flex-direction: column; align-items: center; padding-bottom: 4px; }
.grp button { width: 28px; height: 27px; display: grid; place-items: center; }
.grp .grip { margin-bottom: 3px; }
.grp .on { background: #2a2a2a; border: 1px solid #555; height: 24px; margin: 1px 0 3px; }

.panels { display: flex; flex-direction: column; min-width: 0; border-right: 1px solid #333; background: #484848; }
.panels .colhead { justify-content: flex-end; padding-right: 6px; }
.ptabs { height: 28px; background: #383838; display: flex; border-bottom: 1px solid #303030; align-items: stretch; flex: none; font: 600 11px/16px "Noto Sans", sans-serif; color: #a6a6a6; }
.ptabs button { padding: 0 9px 2px; border-right: 1px solid #2e2e2e; }
.ptabs .on { background: #4a4a4a; color: #f2f2f2; margin-bottom: -1px; }
.ptabs svg { margin: auto 5px auto auto; color: #bbb; }
.color { display: flex; padding: 6px 14px 18px 10px; gap: 5px; }
.color .chips { margin-top: 5px; }
.field { flex: 1; height: 79px; margin-top: 1px; position: relative; background: linear-gradient(transparent, #000), linear-gradient(90deg, #fff, #1683f5 80%); }
.field i { position: absolute; left: 9px; top: 8px; width: 12px; height: 12px; border: 2px solid #222; border-radius: 50%; }
.hue { width: 20px; height: 80px; margin-left: 12px; position: relative; background: linear-gradient(#ec2f3a 0 11%, #f81fd0 12% 22%, #6048cc 23% 28%, #2041d8 29% 42%, #299be5 46%, #9ce8ee 50%, #62f454 54%, #22fb2c 60% 75%, #7df554 78%, #e4f846 81% 87%, #f96a38 89% 94%, #ec2f3a 95%); }
.hue svg { position: absolute; left: -10px; top: 31px; }
.props { border-top: 3px solid #303030; }
.kind { height: 34px; border-bottom: 1px solid #333; display: flex; align-items: center; gap: 5px; padding-left: 11px; color: #ccc; font-size: 11px; }
.kind span { width: 22px; height: 22px; background: #2b2b2b; border: 1px solid #5a5a5a; border-radius: 2px; display: grid; place-items: center; }
.propbody { height: 268px; position: relative; padding: 7px 14px 0 6px; }
.propbody .scroll { position: absolute; right: 0; top: 0; bottom: 0; width: 14px; background: #404040; }
.scroll i { display: block; margin: 3px 2px 0; height: 127px; border-radius: 5px; background: #656565; }
.propbody h2 { display: flex; align-items: center; gap: 5px; font: 700 12px/16px "Noto Sans", sans-serif; color: #eee; }
.dims { display: flex; gap: 13px; padding: 6px 0 0 42px; }
.dims label { display: flex; align-items: center; gap: 6px; font-size: 11px; }
.dims input { width: 54px; height: 17px; background: #3c3c3c; border: 1px solid #707070; color: #eee; font: 11px Inter, sans-serif; padding: 0 3px; }
.dims input:disabled { background: #464646; border-color: #5a5a5a; color: #6a6a6a; }
.link { margin: -2px 0 0 12px; }
.layers { flex: 1; display: flex; flex-direction: column; min-height: 0; border-top: 2px solid #303030; background: #434343; }
.lbar { height: 32px; border-bottom: 1px solid #333; }
.lbar + .lbar { height: 28px; }
.layer { height: 144px; border-bottom: 1px solid #3a3a3a; padding: 116px 0 0 50px; }
.layer i { display: block; width: 22px; height: 22px; border: 1px solid #1c1c1c; background: repeating-conic-gradient(#dedede 0 25%, #9a9a9a 0 50%) 0 0 / 8px 8px; }
.lempty { flex: 1; }
.lfoot { height: 26px; border-top: 1px solid #333; background: #484848; display: flex; align-items: center; gap: 14px; padding-right: 27px; justify-content: flex-end; color: #ddd; }
.lfoot .dim { color: #8c8c8c; }
.lfoot em { font: italic 13px/16px "Noto Sans", sans-serif; }

.finder { position: absolute; left: 987px; top: 314px; width: 920px; height: 436px; background: #252525; border-radius: 9px; outline: 1px solid #050505; box-shadow: inset 0 0 0 1px #484848, 0 6px 22px rgba(0, 0, 0, .5); display: grid; grid-template-columns: 195px minmax(0, 1fr); overflow: hidden; color: #999; }
.finder i.thumb { position: absolute; width: 8px; border-radius: 4px; background: #6a6a68; }
.side { position: relative; border-right: 1px solid #000; overflow: hidden; font-size: 13px; color: #6e6e6c; }
.side .lights { padding: 20px 0 8px 20px; }
.side .lights i { background: #454545; }
.side h3 { font: 600 11px/18px Inter, sans-serif; margin: 14px 0 0 16px; color: #686868; }
.side a { display: flex; align-items: center; height: 28px; margin: 0 25px 0 10px; padding-left: 8px; gap: 6px; color: inherit; text-decoration: none; border-radius: 5px; }
.side a svg { width: 16px; height: 16px; color: #2c5080; }
.side a.loc svg { color: #565656; }
.side a svg.eject { margin-left: auto; margin-right: 7px; }
.side a.on { background: #3b3b3b; color: #8c8c8a; }
.side .thumb { right: 3px; top: 55px; height: 242px; }
.files { display: grid; grid-template-rows: 53px minmax(0, 1fr) 15px; min-width: 0; }
.ftool { display: flex; align-items: center; border-bottom: 1px solid #000; padding: 0 18px 0 22px; color: #5c5c5a; }
.back { color: #858583; margin-right: 27px; }
.ftool h2 { font: 600 15px/20px Inter, sans-serif; color: #636361; margin: 0 auto 0 19px; }
.g1 { margin-left: 49px; }
.g2 { margin-left: 23px; }
.g3 { margin-left: 22px; }
.g4 { margin-left: 22px; }
.g5 { margin-left: 44px; }
.list { position: relative; overflow: hidden; border-bottom: 1px solid #3a3a3a; }
table { width: 100%; border-collapse: collapse; table-layout: fixed; font-size: 13px; line-height: 20px; }
th { height: 27px; padding: 0 0 3px 8px; text-align: left; font-weight: 500; font-size: 11px; color: #a2a2a0; background: #202020; border-bottom: 1px solid #3c3c3c; position: relative; overflow: hidden; white-space: nowrap; }
th:first-child { padding-left: 47px; }
th:nth-child(2) { width: 97px; }
th:nth-child(3) { width: 115px; }
th:nth-child(4) { width: 15px; color: #fff; font-weight: 700; }
th + th::before { content: ""; position: absolute; left: 0; top: 4px; bottom: 4px; width: 1px; background: #3a3a3a; }
td { height: 20px; padding: 0 6px 0 8px; background: #1e1e1e; white-space: nowrap; }
td:first-child { color: #e4e4e2; padding-left: 28px; }
td:first-child svg { display: inline-block; width: 12px; height: 14px; margin-right: 7px; vertical-align: -2px; }
td:nth-child(2) { text-align: right; }
td:last-child { background: #272727; border-left: 1px solid #3a3a3a; padding: 0; }
tr:nth-child(odd) td:not(:last-child) { background: #262626; }
tr.sel td:not(:last-child) { background: #404040; }
.part td { height: 3px; line-height: 0; padding: 0; }
.list .thumb { right: 4px; top: 34px; height: 18px; }
.hbar { padding: 3px 0 0 3px; }
.hbar i { display: block; width: 550px; height: 8px; border-radius: 4px; background: #6a6a68; }
.cursor { position: absolute; left: 1142px; top: 908px; }
```
